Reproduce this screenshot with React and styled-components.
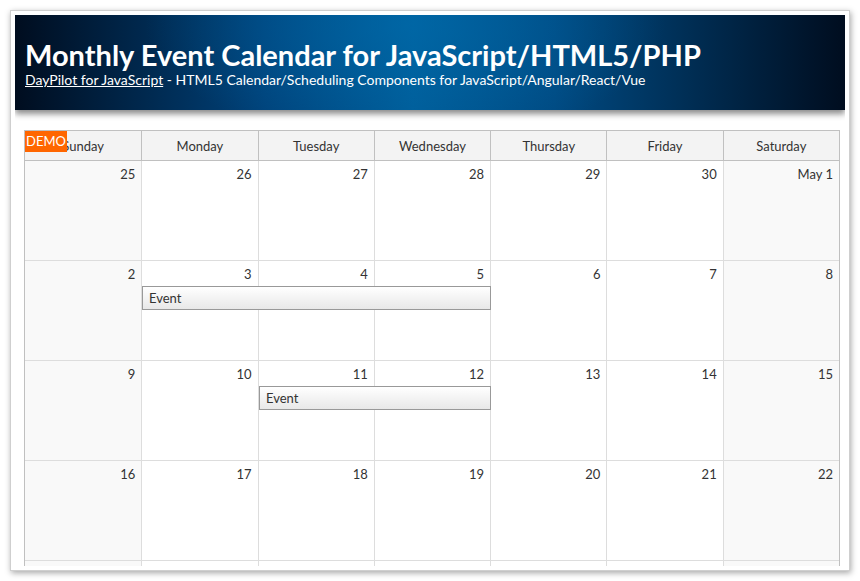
import React from 'react'
import styled, { createGlobalStyle } from 'styled-components'

const GlobalStyle = createGlobalStyle`
	html, body {
		margin: 0;
		padding: 0;
		background: #ffffff;
	}
	body {
		font-family: Lato, "Open Sans", sans-serif;
		color: #333333;
	}
`

const Frame = styled.div`
	margin: 10px;
	border: 1px solid #cfcfcf;
	background: #ffffff;
	box-shadow: 1px 2px 6px rgba(0, 0, 0, 0.35);
	padding: 4px;
	box-sizing: content-box;
	width: 830px;
	height: 551px;
`

const Viewport = styled.div`
	width: 830px;
	height: 551px;
	overflow: hidden;
	display: flex;
	flex-direction: column;
`

const Header = styled.div`
	flex: 0 0 95px;
	box-sizing: border-box;
	padding: 23px 10px 0 10px;
	color: #ffffff;
	background:
		radial-gradient(ellipse 260px 120px at 47% 10%, rgba(0, 110, 175, 0.55), rgba(0, 110, 175, 0) 100%),
		linear-gradient(to right, #000d1f 0%, #00427a 30%, #005d99 48%, #004a82 65%, #000d1f 100%);
	box-shadow: 0 4px 6px rgba(0, 0, 0, 0.45);
	position: relative;
	z-index: 1;

	h1 {
		margin: 0;
		font-family: Lato, "Open Sans", sans-serif;
		font-weight: 700;
		font-size: 29px;
		line-height: 33px;
	}
`

const Subtitle = styled.div`
	font-size: 14px;
	line-height: 18px;

	a {
		color: #ffffff;
		text-decoration: underline;
	}
`

const Content = styled.div`
	flex: 1;
	padding: 20px 5px 0 9px;
`

const Calendar = styled.div`
	position: relative;
	width: 816px;
	box-sizing: border-box;
	border: 1px solid #c0c0c0;
	border-bottom: none;
`

const HeaderRow = styled.div`
	display: grid;
	grid-template-columns: repeat(7, 1fr);
	height: 30px;
	box-sizing: border-box;
	border-bottom: 1px solid #c0c0c0;
	background: #f3f3f3;
`

const HeaderCell = styled.div`
	display: flex;
	align-items: center;
	justify-content: center;
	font-size: 13px;
	color: #333333;
	border-left: ${(p) => (p.$first ? 'none' : '1px solid #c0c0c0')};
`

const Week = styled.div`
	position: relative;
	display: grid;
	grid-template-columns: repeat(7, 1fr);
	height: 100px;
	box-sizing: border-box;
	border-bottom: 1px solid #dddddd;
`

const DayCell = styled.div`
	background: ${(p) => (p.$weekend ? '#f9f9f9' : '#ffffff')};
	border-left: ${(p) => (p.$first ? 'none' : '1px solid #dddddd')};
	text-align: right;
	padding: 5px 6px 0 0;
	font-size: 13px;
	line-height: 16px;
	color: #333333;
`

const Event = styled.div`
	position: absolute;
	top: 25px;
	height: 24px;
	box-sizing: border-box;
	border: 1px solid #999999;
	background: linear-gradient(to bottom, #ffffff 0%, #e8e8e8 100%);
	font-size: 13px;
	line-height: 22px;
	padding-left: 6px;
	color: #333333;
`

const Demo = styled.div`
	position: absolute;
	top: 0;
	left: 0;
	background: #ff6600;
	color: #ffffff;
	font-size: 13px;
	line-height: 21px;
	padding: 0 1px;
	z-index: 2;
`

const dayNames = ['Sunday', 'Monday', 'Tuesday', 'Wednesday', 'Thursday', 'Friday', 'Saturday']

const weeks = [
	['25', '26', '27', '28', '29', '30', 'May 1'],
	['2', '3', '4', '5', '6', '7', '8'],
	['9', '10', '11', '12', '13', '14', '15'],
	['16', '17', '18', '19', '20', '21', '22'],
	['', '', '', '', '', '', ''],
]

const events = [
	{ week: 1, start: 1, end: 3, text: 'Event' },
	{ week: 2, start: 2, end: 3, text: 'Event' },
]

const colWidth = 814 / 7

const App = () => {
	return (
		<>
			<GlobalStyle />
			<Frame>
				<Viewport>
					<Header>
						<h1>Monthly Event Calendar for JavaScript/HTML5/PHP</h1>
						<Subtitle>
							<a href='#'>DayPilot for JavaScript</a> - HTML5 Calendar/Scheduling Components for JavaScript/Angular/React/Vue
						</Subtitle>
					</Header>
					<Content>
						<Calendar>
							<Demo>DEMO</Demo>
							<HeaderRow>
								{dayNames.map((d, i) => (
									<HeaderCell key={d} $first={i === 0}>{d}</HeaderCell>
								))}
							</HeaderRow>
							{weeks.map((w, wi) => (
								<Week key={wi}>
									{w.map((d, di) => (
										<DayCell key={di} $first={di === 0} $weekend={di === 0 || di === 6}>{d}</DayCell>
									))}
									{events
										.filter((e) => e.week === wi)
										.map((e, ei) => (
											<Event
												key={ei}
												style={{
													left: Math.round(e.start * colWidth) + 1,
													width: Math.round((e.end + 1) * colWidth) - Math.round(e.start * colWidth),
												}}
											>
												{e.text}
											</Event>
										))}
								</Week>
							))}
						</Calendar>
					</Content>
				</Viewport>
			</Frame>
		</>
	)
}

export default App
